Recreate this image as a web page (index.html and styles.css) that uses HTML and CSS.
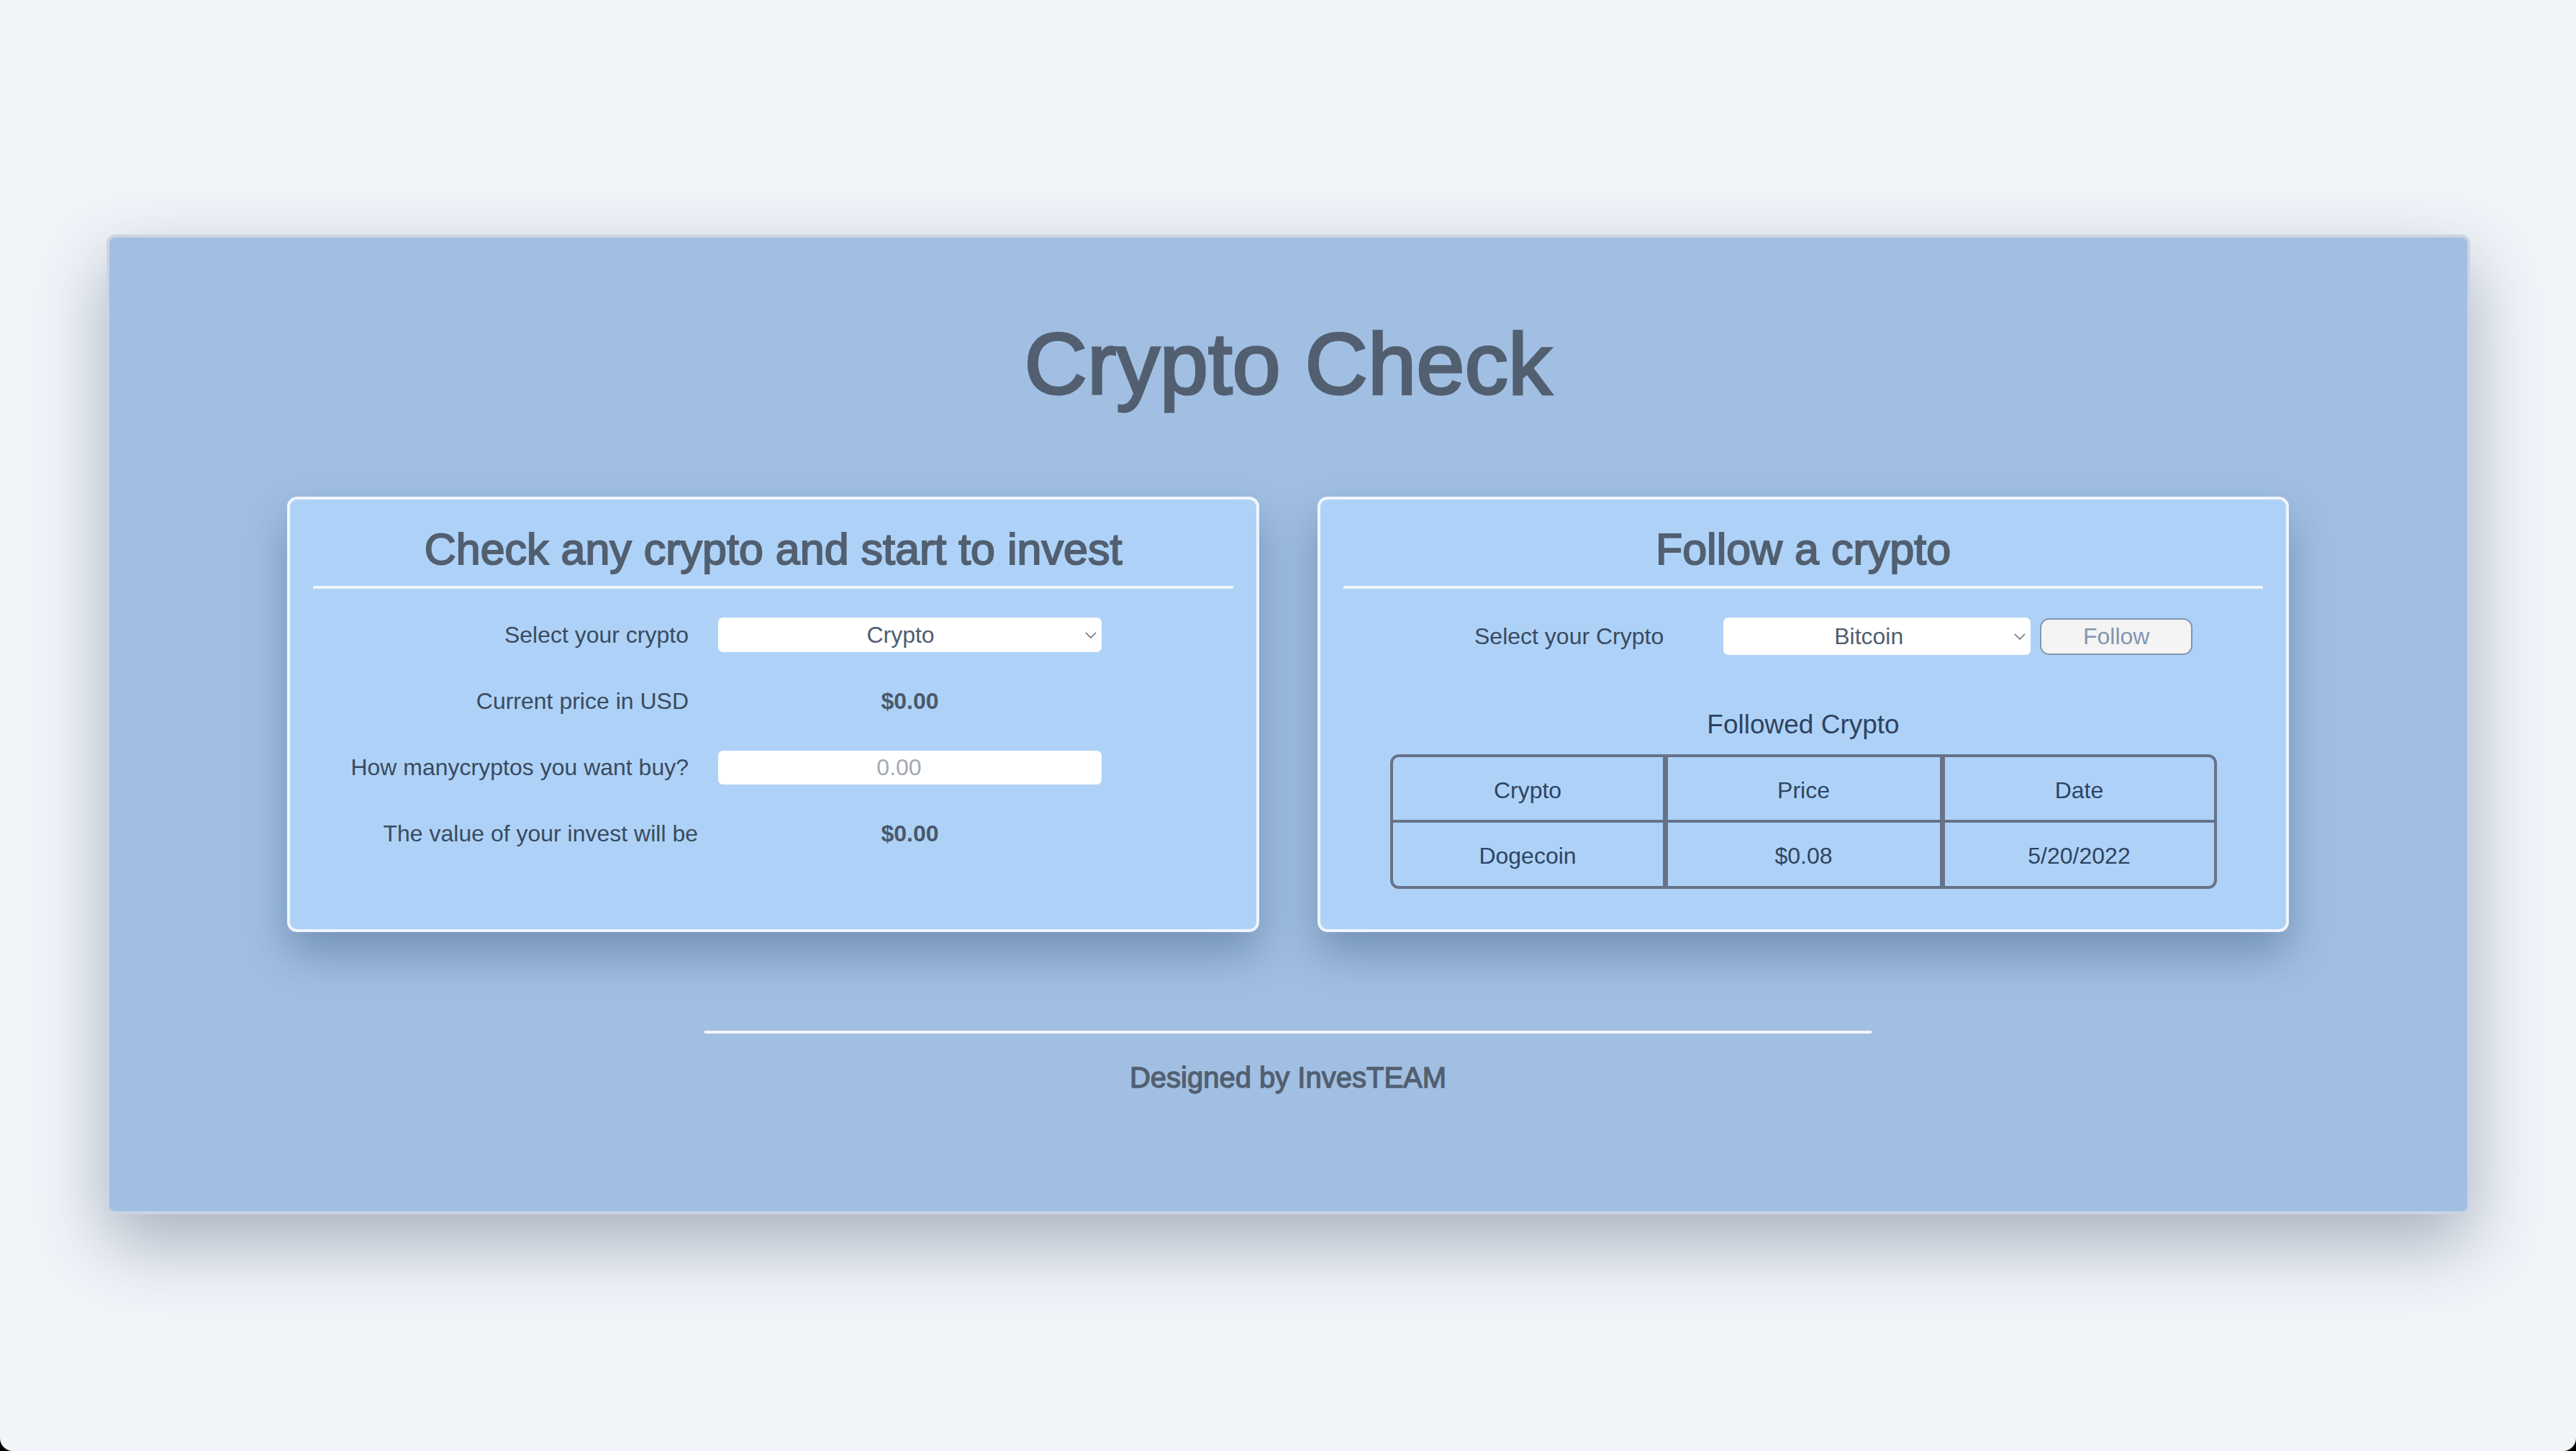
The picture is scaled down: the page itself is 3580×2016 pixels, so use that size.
FILE: index.html
```html
<!DOCTYPE html>
<html lang="en">
<head>
<meta charset="utf-8">
<title>Crypto Check</title>
<link rel="stylesheet" href="styles.css">
</head>
<body>
<main class="app">
  <h1 class="app-title">Crypto Check</h1>
  <div class="cards">
    <section class="card card-invest">
      <h2 class="card-title">Check any crypto and start to invest</h2>
      <hr class="card-rule">
      <div class="form-grid">
        <label class="form-label" for="crypto-select">Select your crypto</label>
        <div class="select-wrap select-wide">
          <select id="crypto-select" class="select"><option>Crypto</option></select>
          <svg class="chevron" viewBox="0 0 16 9" aria-hidden="true"><path d="M1 1l7 7 7-7"/></svg>
        </div>
        <span class="form-label">Current price in USD</span>
        <span class="form-value">$0.00</span>
        <label class="form-label" for="amount">How manycryptos you want buy?</label>
        <input id="amount" class="amount-input" type="text" placeholder="0.00">
        <span class="form-label form-label-wide">The value of your invest will be</span>
        <span class="form-value">$0.00</span>
      </div>
    </section>
    <section class="card card-follow">
      <h2 class="card-title">Follow a crypto</h2>
      <hr class="card-rule">
      <div class="follow-row">
        <label class="follow-label" for="follow-select">Select your Crypto</label>
        <div class="select-wrap select-narrow">
          <select id="follow-select" class="select select-pad"><option>Bitcoin</option></select>
          <svg class="chevron" viewBox="0 0 16 9" aria-hidden="true"><path d="M1 1l7 7 7-7"/></svg>
        </div>
        <button class="follow-btn" type="button">Follow</button>
      </div>
      <h3 class="followed-title">Followed Crypto</h3>
      <table class="followed-table">
        <colgroup>
          <col class="col-crypto">
          <col class="col-price">
          <col class="col-date">
        </colgroup>
        <thead>
          <tr><th>Crypto</th><th>Price</th><th>Date</th></tr>
        </thead>
        <tbody>
          <tr><td>Dogecoin</td><td>$0.08</td><td>5/20/2022</td></tr>
        </tbody>
      </table>
    </section>
  </div>
  <hr class="footer-rule">
  <p class="footer-text">Designed by InvesTEAM</p>
</main>
</body>
</html>
```
FILE: styles.css
```css
* { box-sizing: border-box; }

html {
  background: #000;
}

body {
  margin: 0;
  height: 2016px;
  padding-top: 326px;
  background: #f1f5fa;
  border-radius: 0 0 18px 18px;
  overflow: hidden;
  font-family: "Liberation Sans", Arial, Helvetica, sans-serif;
}

.app {
  width: 3285px;
  margin: 0 auto;
  background: #a1bfe2;
  border: 4px solid #cbd5e2;
  border-radius: 12px;
  box-shadow: 0 40px 100px rgba(35, 50, 80, 0.36);
  padding: 107px 0 163px;
  text-align: center;
}

.app-title {
  margin: 0;
  font-size: 121px;
  line-height: 136px;
  font-weight: 400;
  color: #525f70;
  -webkit-text-stroke: 3.4px #525f70;
}

.cards {
  display: grid;
  grid-template-columns: 1351px 1350px;
  column-gap: 81px;
  justify-content: center;
  margin-top: 117px;
}

.card {
  background: #aed2f7;
  border: 4px solid #f0f5fc;
  border-radius: 14px;
  padding: 35px 32px 0;
  box-shadow: 0 30px 60px rgba(40, 70, 110, 0.38);
}

.card-invest {
  padding-bottom: 109px;
}

.card-title {
  margin: 0;
  font-size: 61px;
  line-height: 68px;
  font-weight: 400;
  color: #525f70;
  -webkit-text-stroke: 2px #525f70;
}

.card-rule {
  margin: 17px 0 0;
  height: 4px;
  border: 0;
  background: #f0f5fb;
}

.form-grid {
  display: grid;
  grid-template-columns: 522px 533px;
  grid-auto-rows: 48px;
  column-gap: 41px;
  row-gap: 44px;
  align-items: center;
  margin-top: 40px;
}

.form-label {
  text-align: right;
  font-size: 32px;
  color: #3a4a60;
}

.form-label-wide {
  margin-right: -13px;
  white-space: nowrap;
}

.form-value {
  text-align: center;
  font-size: 32px;
  font-weight: 700;
  color: #4b586b;
}

.select-wrap {
  position: relative;
}

.select-wide {
  height: 48px;
}

.select-narrow {
  width: 427px;
  height: 52px;
  margin-right: 13px;
}

.select {
  width: 100%;
  height: 100%;
  -webkit-appearance: none;
  appearance: none;
  border: 0;
  border-radius: 7px;
  background: #fff;
  font-family: "Liberation Sans", Arial, sans-serif;
  font-size: 32px;
  color: #4f5d70;
  text-align: center;
  text-align-last: center;
  padding: 0 26px 0 0;
  outline: none;
}

.select-pad {
  padding-right: 23px;
}

.chevron {
  position: absolute;
  right: 7px;
  top: 50%;
  width: 16px;
  height: 9px;
  margin-top: -4px;
  fill: none;
  stroke: #5a5f66;
  stroke-width: 1.4;
  pointer-events: none;
}

.amount-input {
  width: 533px;
  height: 47px;
  border: 0;
  border-radius: 7px;
  background: #fff;
  font-family: "Liberation Sans", Arial, sans-serif;
  font-size: 32px;
  color: #4f5d70;
  text-align: center;
  padding: 0 30px 0 0;
  outline: none;
}

.amount-input::placeholder {
  color: #a2a8b2;
}

.follow-row {
  display: flex;
  align-items: center;
  height: 52px;
  margin: 40px 0 0 182px;
}

.follow-label {
  font-size: 32px;
  color: #3a4a60;
  margin-right: 83px;
}

.follow-btn {
  width: 212px;
  height: 51px;
  background: #f4f4f4;
  border: 2px solid #8195b0;
  border-radius: 13px;
  font-family: "Liberation Sans", Arial, sans-serif;
  font-size: 32px;
  color: #8396b0;
  padding: 0;
}

.followed-title {
  margin: 76px 0 21px;
  font-size: 37px;
  line-height: 41px;
  font-weight: 400;
  color: #2f4260;
}

.followed-table {
  width: 1149px;
  margin: 0 auto;
  border-collapse: separate;
  border-spacing: 0;
  border: 4px solid #677288;
  border-radius: 12px;
  table-layout: fixed;
}

.col-crypto { width: 382px; }
.col-price { width: 385px; }
.col-date { width: 374px; }

.followed-table th,
.followed-table td {
  padding: 5px 0 0;
  font-size: 32px;
  font-weight: 400;
  color: #2e4462;
  text-align: center;
  vertical-align: middle;
}

.followed-table th {
  height: 91px;
  border-bottom: 4px solid #677288;
}

.followed-table td {
  height: 88px;
}

.followed-table th:not(:last-child),
.followed-table td:not(:last-child) {
  border-right: 7px solid #677288;
}

.footer-rule {
  width: 1622px;
  height: 4px;
  margin: 137px auto 0;
  border: 0;
  background: #f2f5fa;
}

.footer-text {
  margin: 38px 0 0;
  font-size: 40px;
  line-height: 46px;
  color: #525f70;
  -webkit-text-stroke: 1.3px #525f70;
}
```
